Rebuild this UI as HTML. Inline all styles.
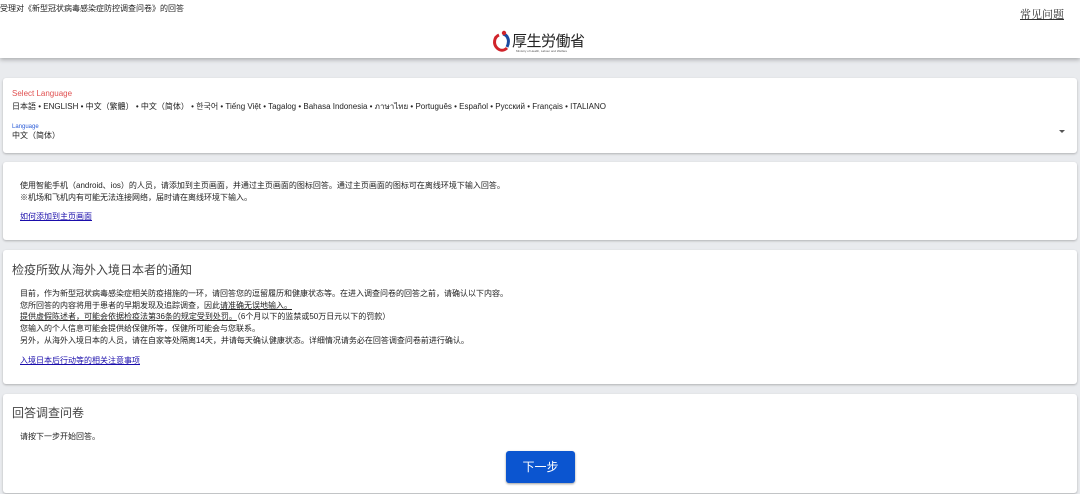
<!DOCTYPE html>
<html><head><meta charset="utf-8"><style>
body{margin:0;width:1080px;height:494px;overflow:hidden;background:#e9ebee;font-family:"Liberation Sans","Noto Sans CJK SC",sans-serif;color:#222;}
.hdr{position:absolute;left:0;top:0;width:1080px;height:58px;background:#fff;box-shadow:0 2px 4px rgba(0,0,0,.25);}
.card{position:absolute;left:3px;width:1074px;background:#fff;border-radius:3px;box-shadow:0 1px 2px rgba(0,0,0,.25);}
.s{font-size:8px;line-height:11.7px;}
a{color:#1a0dab;}
</style></head><body>
<div class="hdr">
<div style="position:absolute;left:0;top:3px;font-size:8px;">受理对《新型冠状病毒感染症防控调查问卷》的回答</div>
<div style="position:absolute;left:1020px;top:6px;font-size:11px;font-family:'Noto Serif CJK SC',serif;text-decoration:underline;color:#333;">常见问题</div>
<svg style="position:absolute;left:492px;top:30px" width="20" height="22" viewBox="0 0 20 22"><path d="M7 5 C2 7 1 14 5 18 C8 21 12 21 15 18" fill="none" stroke="#d0232a" stroke-width="3"/><path d="M11 4 C16 5 18 11 15 17" fill="none" stroke="#1b4aa0" stroke-width="3"/><circle cx="12" cy="3" r="2.2" fill="#d0232a"/></svg>
<div style="position:absolute;left:512px;top:30px;font-size:15px;color:#222;letter-spacing:-0.5px;">厚生労働省</div>
<div style="position:absolute;left:516px;top:49px;font-size:3px;color:#555;">Ministry of Health, Labour and Welfare</div>
</div>
<div class="card" style="top:78px;height:75px;">
<div style="position:absolute;left:9px;top:11px;font-size:8px;color:#e05050;">Select Language</div>
<div style="position:absolute;left:9px;top:22px;font-size:8px;white-space:nowrap;">日本語 • ENGLISH • 中文（繁體） • 中文（简体） • 한국어 • Tiếng Việt • Tagalog • Bahasa Indonesia • ภาษาไทย • Português • Español • Русский • Français • ITALIANO</div>
<div style="position:absolute;left:9px;top:46px;font-size:6px;color:#2a5bd7;">Language</div>
<div style="position:absolute;left:9px;top:52px;font-size:8px;">中文（简体）</div>
<div style="position:absolute;left:1056px;top:52px;width:0;height:0;border-left:3px solid transparent;border-right:3px solid transparent;border-top:3px solid #555;"></div>
</div>
<div class="card s" style="top:162px;height:78px;">
<div style="position:absolute;left:17px;top:18px;">使用智能手机（android、ios）的人员，请添加到主页画面，并通过主页画面的图标回答。通过主页画面的图标可在离线环境下输入回答。<br>※机场和飞机内有可能无法连接网络，届时请在离线环境下输入。</div>
<div style="position:absolute;left:17px;top:49px;"><a href="#">如何添加到主页画面</a></div>
</div>
<div class="card s" style="top:250px;height:134px;">
<div style="position:absolute;left:9px;top:12px;font-size:12px;line-height:16px;color:#444;">检疫所致从海外入境日本者的通知</div>
<div style="position:absolute;left:17px;top:38px;">目前，作为新型冠状病毒感染症相关防疫措施的一环，请回答您的逗留履历和健康状态等。在进入调查问卷的回答之前，请确认以下内容。<br>您所回答的内容将用于患者的早期发现及追踪调查，因此<u>请准确无误地输入。</u><br><u>提供虚假陈述者，可能会依据检疫法第36条的规定受到处罚。</u>（6个月以下的监禁或50万日元以下的罚款）<br>您输入的个人信息可能会提供给保健所等，保健所可能会与您联系。<br>另外，从海外入境日本的人员，请在自家等处隔离14天，并请每天确认健康状态。详细情况请务必在回答调查问卷前进行确认。</div>
<div style="position:absolute;left:17px;top:105px;"><a href="#">入境日本后行动等的相关注意事项</a></div>
</div>
<div class="card s" style="top:394px;height:99px;">
<div style="position:absolute;left:9px;top:11px;font-size:12px;line-height:16px;color:#444;">回答调查问卷</div>
<div style="position:absolute;left:17px;top:37px;">请按下一步开始回答。</div>
<div style="position:absolute;left:503px;top:57px;width:69px;height:32px;background:#0b55d0;border-radius:3px;box-shadow:0 1px 2px rgba(0,0,0,.4);color:#fff;font-size:12px;line-height:32px;text-align:center;">下一步</div>
</div>
</body></html>
